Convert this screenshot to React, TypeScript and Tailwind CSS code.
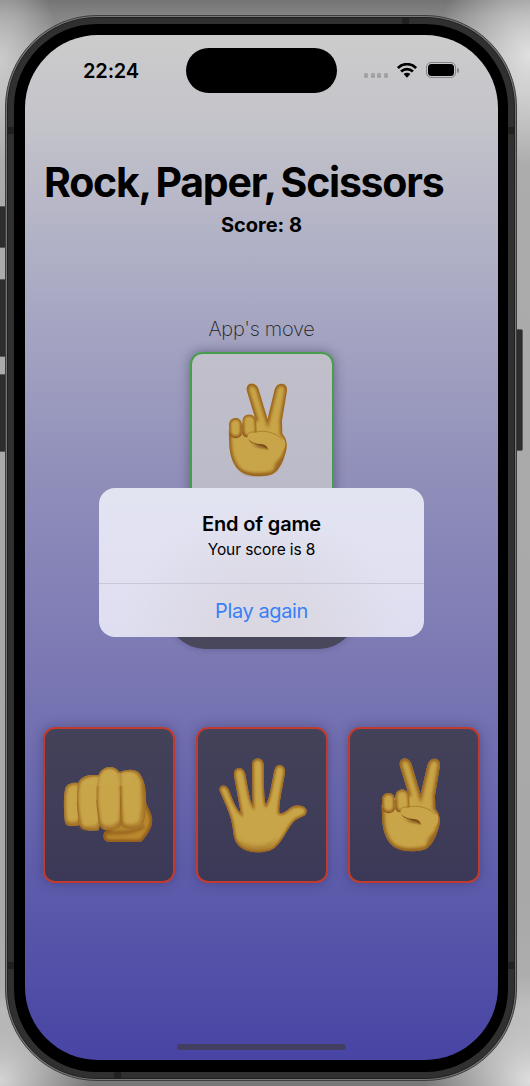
import React, { useId } from "react";

/* A rounded, shaded shape: flat fill with a soft darker rim on the inside. */
function Part({ d, fill = "#c8a548", rim = "#96601c", width = 14, blur = 4 }: { d: string; fill?: string; rim?: string; width?: number; blur?: number }) {
  const id = useId();
  return (
    <g>
      <clipPath id={`c${id}`}>
        <path d={d} />
      </clipPath>
      <filter id={`f${id}`} x="-20%" y="-20%" width="140%" height="140%">
        <feGaussianBlur stdDeviation={blur} />
      </filter>
      <path d={d} fill={fill} />
      <g clipPath={`url(#c${id})`}>
        <path d={d} fill="none" stroke={rim} strokeWidth={width} filter={`url(#f${id})`} />
      </g>
    </g>
  );
}

function Soft({ d, color = "#8a5419", width = 0, opacity = 0.6, blur = 4 }: { d: string; color?: string; width?: number; opacity?: number; blur?: number }) {
  const id = useId();
  return (
    <>
      <filter id={`s${id}`} x="-30%" y="-60%" width="160%" height="220%">
        <feGaussianBlur stdDeviation={blur} />
      </filter>
      <path d={d} fill={width ? "none" : color} stroke={width ? color : "none"} strokeWidth={width} strokeLinecap="round" opacity={opacity} filter={`url(#s${id})`} />
    </>
  );
}

function Victory({ className }: { className: string }) {
  return (
    <svg viewBox="0 0 176 280" className={className}>
      <Part d="M56 22C53-3 82-6 91 18L118 108L139 20C145-5 178-4 176 22L161 112L162 151C176 166 178 188 172 208C163 237 152 260 136 270C118 281 72 281 48 270C21 257 8 230 4 190L2 140L40 120L82 108Z" />
      <Soft d="M34 262C65 272 118 271 139 260C116 281 60 281 34 262ZM164 215C160 238 150 253 136 266L140 240Z" opacity={0.65} blur={5} />
      <Part d="M3 125C3 98 39 98 41 122L41 144C39 168 8 168 4 145Z" width={10} blur={3} />
      <Part d="M43 115C43 87 82 87 84 115L86 148L62 160C50 162 44 153 44 142Z" width={10} blur={3} />
      <path d="M5 150C10 167 35 167 41 150M42 125V144C45 157 52 162 62 160" fill="none" stroke="#8c581c" strokeWidth="3" />
      <path d="M58 159C57 147 68 145 80 147C105 140 126 142 141 150C163 160 172 170 171 182C170 205 150 218 125 207C118 194 111 184 100 181C80 181 60 178 58 159Z" fill="#c8a548" />
      <Soft d="M70 178C88 193 109 180 119 198C110 190 85 197 70 178Z" color="#6d3c14" opacity={1} blur={3} />
      <path d="M61 167C73 184 96 180 108 184C116 188 118 193 118 200C110 187 96 188 84 183C72 180 64 176 61 167Z" fill="#7e4a18" />
      <path d="M58 160C57 147 68 145 80 147C111 138 143 149 163 168" fill="none" stroke="#aa7929" strokeWidth="2.5" />
    </svg>
  );
}

function Fist({ className }: { className: string }) {
  return (
    <svg viewBox="0 0 268 230" className={className}>
      <Part d="M242 90C250 125 268 143 266 166C264 188 252 204 240 219C235 227 228 228 216 227L136 226C116 225 118 199 127 194L177 165Z" fill="#b98a2e" rim="#8f591b" />
      <Soft d="M132 199C164 201 212 201 238 181" width={12} color="#8a541a" opacity={0.65} />
      <Part d="M44 51C34 48 12 51 7 65C0 90 2 135 5 164C8 182 24 181 49 177L58 126L54 52Z" width={9} />
      <Part d="M112 28C86 26 65 25 48 44C38 62 38 127 49 169C50 191 64 195 106 192L118 140Z" width={9} />
      <Part d="M105 29C116-2 153-5 169 19C178 46 178 126 172 170C169 188 154 193 132 191C114 191 109 179 105 158C97 107 97 60 105 29Z" width={9} />
      <Part d="M168 19C190 8 217 8 228 22C246 47 247 77 247 111C248 160 240 185 223 186C206 189 178 189 174 176C169 144 169 60 168 19Z" width={11} blur={5} />
      <path d="M58 50C68 38 82 31 100 31L110 31C124 3 147 6 164 23C187 15 204 14 214 26L190 60H58Z" fill="#c9a84c" opacity="0.55" />
      <Soft d="M12 170C25 175 37 172 44 168M54 183C70 188 85 186 101 181M114 178C132 187 151 184 166 172M180 175C198 182 219 181 229 169M237 60C240 95 239 135 232 163" width={10} color="#99601d" opacity={0.55} />
      <path d="M42 108L47 168M99 100L108 174M172 95L172 170" stroke="#955f1f" strokeWidth="2" fill="none" opacity="0.7" />
    </svg>
  );
}

function OpenHand({ className }: { className: string }) {
  return (
    <svg viewBox="0 0 264 284" className={className}>
      <Part d="M2 98C-2 80 21 76 29 94C39 118 49 150 65 164L45 52C42 24 73 22 79 48C86 83 91 125 101 140L99 21C98-5 134-6 134 21C135 61 134 125 141 139C154 116 158 72 166 37C171 12 201 16 198 44C192 83 178 140 181 164C193 170 204 155 219 146C231 139 256 141 262 154C267 178 243 173 228 187C205 207 197 243 168 268C145 287 91 287 67 269C44 252 45 234 40 202C35 168 14 127 2 98Z" rim="#99611c" width={10} blur={3} />
      <Soft d="M52 243C88 272 145 272 180 240C168 262 148 279 120 281C84 281 62 269 52 243Z" opacity={0.5} blur={6} />
    </svg>
  );
}

function Choice({ children }: { children: React.ReactNode }) {
  return (
    <button className="flex h-[156px] w-[132px] justify-center rounded-[12px] border-2 border-[#c03b2d] bg-linear-to-b from-[#444259] to-[#3b3957] shadow-[0_0_12px_rgba(35,32,75,0.38)]">
      {children}
    </button>
  );
}

function StatusBar() {
  return (
    <div className="flex h-[58px] shrink-0 pt-[13px]">
      <div className="flex w-[161px] justify-center pl-[11px] text-[20px] leading-[46px] font-semibold tracking-[-0.2px]">
        22:24
      </div>
      <div className="h-[45px] w-[151px] rounded-full bg-black" />
      <div className="flex h-[44px] items-center pl-[27px]">
        <div className="mt-[11px] mr-[9px] flex gap-[2.4px]">
          {[0, 1, 2, 3].map((n) => (
            <span key={n} className="h-[4.5px] w-[4.2px] rounded-[1.5px] bg-[#a1a1a6]" />
          ))}
        </div>
        <svg viewBox="0 0 20 15" className="mr-[9px] h-[15px] w-[20px]" fill="none" stroke="#000" strokeWidth="2.8">
          <path d="M.9 5.1C6-.1 14-.1 19.1 5.1M4.1 8.5C7.5 5.3 12.5 5.3 15.9 8.5" />
          <path d="M6.6 11.1C8.6 9.3 11.4 9.3 13.4 11.1L10 14.7Z" fill="#000" stroke="none" />
        </svg>
        <div className="h-[16px] w-[30px] rounded-[5px] border border-[#858588] p-px">
          <div className="h-full w-full rounded-[3.5px] bg-black" />
        </div>
        <div className="ml-px h-[5px] w-[2px] rounded-r-full bg-[#858588]" />
      </div>
    </div>
  );
}

function Alert() {
  return (
    <div className="absolute top-[453px] left-[74px] flex h-[149px] w-[325px] flex-col overflow-hidden rounded-[16px] bg-[#e0dff1] bg-[radial-gradient(ellipse_at_50%_105%,#d9d6df_0%,#dbd9e4_25%,transparent_62%),linear-gradient(#e3e4f2,#dfdef1)] text-center">
      <div className="h-[97px] border-b border-[#c9c8d9] pt-[24px]">
        <h2 className="text-[20px] leading-[25px] font-semibold tracking-[-0.15px]">End of game</h2>
        <p className="mt-[3px] text-[15.5px] leading-[20px] tracking-[-0.1px]">Your score is 8</p>
      </div>
      <button className="h-[53px] text-[20px] leading-[54px] font-normal tracking-[-0.4px] text-[#3880f6]">Play again</button>
    </div>
  );
}

function SideButton({ className }: { className: string }) {
  return <div className={`absolute border border-[#595959] bg-[#2d2d2d] ${className}`} />;
}

export default function App() {
  return (
    <main className="relative h-[1086px] w-[530px] overflow-hidden bg-[#ababab] bg-[radial-gradient(ellipse_60px_100px_at_0_60px,#cbcbcb_0,transparent_100%),radial-gradient(ellipse_95px_110px_at_530px_55px,#e0e0e0_0,transparent_100%),radial-gradient(circle_at_0_1080px,#d4d4d4_0,transparent_90px),radial-gradient(circle_at_530px_1080px,#dedede_0,transparent_105px),linear-gradient(#747474_0,#858585_16px,#b0b0b0_90px,#ababab_200px,#a8a8a8_900px,#b0b0b0_1010px,#777_1086px)] pt-[15px] pl-[5px] font-['Inter','Liberation_Sans',sans-serif] text-black">
      <SideButton className="top-[206px] left-[-1px] h-[42px] w-[8px]" />
      <SideButton className="top-[279px] left-[-1px] h-[78px] w-[8px]" />
      <SideButton className="top-[374px] left-[-1px] h-[78px] w-[8px]" />
      <SideButton className="top-[329px] left-[514px] h-[122px] w-[9px] rounded-r-[2px]" />

      <div className="relative h-[1066px] w-[512px] rounded-[92px] border border-[#3d3d3d] bg-[#777] p-px">
        <div className="h-full w-full rounded-[90px] border border-[#202020] bg-[#303030] p-[6px]">
          <div className="h-full w-full rounded-[83px] bg-black px-[11px] py-[11px]">
            <div className="relative flex h-[1025px] w-[473px] flex-col overflow-hidden rounded-[73px] bg-[linear-gradient(#cccccc_0,#c3c3ca_90px,#b0b0c6_215px,#9291bb_425px,#7572b2_680px,#5c5bab_855px,#4844a4_1025px)]">
              <StatusBar />
              <header className="mt-[64px]">
                <h1 className="ml-[19px] text-[41px] leading-[50px] font-bold tracking-[-1.25px] [word-spacing:-2.6px] whitespace-nowrap">Rock, Paper, Scissors</h1>
                <p className="mt-[6px] text-center text-[20px] leading-[24px] font-bold">Score: 8</p>
              </header>
              <section className="mt-[80px] flex flex-col items-center">
                <h2 className="text-[20px] leading-[25px] font-extralight tracking-[-0.3px] text-[#1d1d22]">App's move</h2>
                <div className="mt-[10px] flex h-[172px] w-[144px] justify-center rounded-[12px] border-2 border-[#479d4b] bg-linear-to-b from-[#c0bfca] to-[#bab9c8] shadow-[0_0_12px_rgba(30,28,55,0.45)]">
                  <Victory className="mt-[29px] mr-[8px] h-[94px] w-[59px]" />
                </div>
                <div className="mt-[27px] h-[98px] w-[190px] rounded-[38px] bg-[#49475c] shadow-[0_0_7px_rgba(35,32,75,0.3)]" />
              </section>
              <section className="mt-[78px] flex gap-[20.5px] pl-[18px]">
                <Choice><Fist className="mt-[37px] mr-[3px] h-[77px] w-[90px]" /></Choice>
                <Choice><OpenHand className="mt-[29px] ml-[3px] h-[95px] w-[88px]" /></Choice>
                <Choice><Victory className="mt-[29px] mr-[8px] h-[94px] w-[59px]" /></Choice>
              </section>
              <div className="mt-auto mb-[10px] h-[6px] w-[169px] shrink-0 self-center rounded-full bg-[#433f60]" />
              <Alert />
            </div>
          </div>
        </div>
        <span className="absolute top-[111px] left-[2px] h-[7px] w-[6px] bg-[#202020]" />
        <span className="absolute top-[111px] right-[2px] h-[7px] w-[6px] bg-[#202020]" />
        <span className="absolute top-[946px] left-[2px] h-[7px] w-[6px] bg-[#202020]" />
        <span className="absolute top-[946px] right-[2px] h-[7px] w-[6px] bg-[#202020]" />
        <span className="absolute top-[2px] left-[396px] h-[6px] w-[7px] bg-[#202020]" />
        <span className="absolute bottom-[2px] left-[108px] h-[6px] w-[7px] bg-[#202020]" />
      </div>
    </main>
  );
}
